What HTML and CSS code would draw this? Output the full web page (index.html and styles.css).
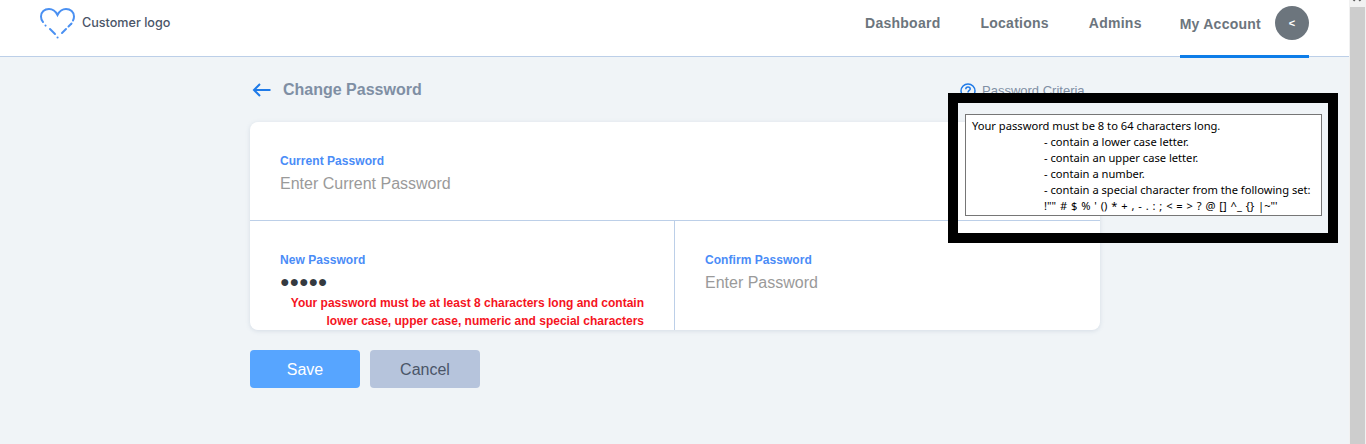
FILE: index.html
```html
<!DOCTYPE html>
<html lang="en">
<head>
<meta charset="utf-8">
<title>Change Password</title>
<link rel="stylesheet" href="styles.css">
</head>
<body>
<div class="page">
  <header class="topbar">
    <div class="brand">
      <svg class="brand-icon" width="36" height="32" viewBox="0 0 36 32" fill="none" stroke="#4a90f2" stroke-width="2" stroke-linecap="round">
        <path d="M3 15 C1.500 13.500 1 11.500 1 9.500 C1 5 4.500 2 9 2 C12.500 2 15.500 4 17.500 8 C19.500 4 22.500 2 26 2 C30.500 2 34 5 34 9.500 C34 11 33.800 12 33 13.500"/>
        <path d="M5.500 18.500 L5.600 18.600"/>
        <path d="M10 22 L15 27"/>
        <path d="M17.500 30.500 L17.600 30.500"/>
        <path d="M22 26 L26 22"/>
        <path d="M28.500 19.500 L31.500 16.500"/>
      </svg>
      <span class="brand-name">Customer logo</span>
    </div>
    <nav class="nav">
      <a class="nav-link">Dashboard</a>
      <a class="nav-link">Locations</a>
      <a class="nav-link">Admins</a>
      <div class="nav-account">
        <a class="nav-link nav-link-active">My Account</a>
        <span class="avatar">&lt;</span>
      </div>
    </nav>
  </header>

  <main class="content">
    <div class="title-row">
      <div class="title-left">
        <svg class="back-icon" width="19" height="14" viewBox="0 0 19 14" fill="none" stroke="#1f7ae8" stroke-width="2">
          <path d="M18.500 7 H2"/>
          <path d="M8 1 L2 7 L8 13"/>
        </svg>
        <h1 class="title">Change Password</h1>
      </div>
      <div class="criteria">
        <svg width="16" height="16" viewBox="0 0 16 16" fill="none" stroke="#1f7ae8" stroke-width="1.500">
          <circle cx="8" cy="8" r="7"/>
          <path d="M5.800 6.200 C5.800 4.800 6.800 4 8 4 C9.300 4 10.200 4.800 10.200 5.900 C10.200 7.400 8 7.500 8 9.400"/>
          <path d="M8 10.800 V12.200"/>
        </svg>
        <span class="criteria-text">Password Criteria</span>
      </div>
    </div>

    <section class="card">
      <div class="field field-current">
        <label class="label">Current Password</label>
        <div class="placeholder">Enter Current Password</div>
      </div>
      <div class="card-row">
        <div class="field field-new">
          <label class="label">New Password</label>
          <div class="dots">●●●●●</div>
          <div class="error">Your password must be at least 8 characters long and contain<br>lower case, upper case, numeric and special characters</div>
        </div>
        <div class="field field-confirm">
          <label class="label">Confirm Password</label>
          <div class="placeholder">Enter Password</div>
        </div>
      </div>
    </section>

    <div class="actions">
      <button class="btn btn-save">Save</button>
      <button class="btn btn-cancel">Cancel</button>
    </div>
  </main>

  <div class="tooltip-frame">
    <div class="tooltip">
      <div>Your password must be 8 to 64 characters long.</div>
      <div class="indent">- contain a lower case letter.</div>
      <div class="indent">- contain an upper case letter.</div>
      <div class="indent">- contain a number.</div>
      <div class="indent">- contain a special character from the following set:</div>
      <div class="indent symbols">!"" # $ % ' () * + , - . : ; &lt; = &gt; ? @ [] ^_ {} |~"'</div>
    </div>
  </div>
</div>
<div class="scrollbar"><span class="scroll-arrow"></span><div class="scroll-thumb"></div></div>
</body>
</html>
```
FILE: styles.css
```css
* { box-sizing: border-box; }
html, body { margin: 0; height: 100%; overflow: hidden; }
body { display: flex; background: #fff; font-family: "Liberation Sans", Arial, sans-serif; }

.page { position: relative; width: 1349px; height: 444px; background: #f0f4f7; flex: none; }
.scrollbar { position: relative; width: 17px; height: 444px; background: #f1f1f1; flex: none; padding: 7px 1px 0; }
.scroll-thumb { height: 437px; background: #cdcdcd; }
.scroll-arrow { position: absolute; top: -3px; left: 5px; width: 6px; height: 6px; border-left: 2px solid #555; border-top: 2px solid #555; transform: rotate(45deg); }

.topbar { height: 57px; background: #fff; border-bottom: 1px solid #bccfe8; display: flex; justify-content: space-between; padding: 0 40px; }
.brand { display: flex; align-items: center; gap: 6px; height: 45px; }
.brand-name { font-family: "Inter", "Noto Sans", sans-serif; font-size: 12.6px; font-weight: 500; color: #4a5568; }
.nav { display: flex; gap: 40px; }
.nav-link { font-size: 14px; font-weight: 700; color: #6c757d; letter-spacing: 0.25px; line-height: 46px; }
.nav-account { display: flex; gap: 14px; height: 58px; margin-left: -2px; border-bottom: 3px solid #0d7de8; }
.nav-link-active { line-height: 48px; }
.avatar { width: 34px; height: 34px; margin-top: 6px; border-radius: 50%; background: #6c757d; color: #fff; font-size: 11px; font-weight: 700; display: flex; align-items: center; justify-content: center; }

.content { width: 850px; margin-left: 250px; }
.title-row { display: flex; justify-content: space-between; height: 65px; padding-top: 23px; }
.title-left { display: flex; align-items: flex-start; gap: 12px; padding-left: 2px; }
.back-icon { margin-top: 3px; }
.title { margin: 0; font-size: 16px; line-height: 19px; font-weight: 700; color: #7f8fa4; }
.criteria { display: flex; gap: 6px; width: 140px; padding-top: 3px; }
.criteria-text { font-size: 13px; line-height: 16px; color: #7f8fa4; white-space: nowrap; }

.card { background: #fff; border-radius: 8px; box-shadow: 0 1px 4px rgba(130, 150, 180, 0.25); height: 208px; }
.field-current { height: 99px; padding: 32px 30px 0; border-bottom: 1px solid #bccfe8; }
.card-row { display: flex; height: 109px; }
.field-new { width: 425px; padding: 32px 30px 0; border-right: 1px solid #bccfe8; }
.field-confirm { flex: 1; padding: 32px 30px 0; }
.label { display: block; font-size: 12px; line-height: 15px; font-weight: 700; color: #4a8cf7; letter-spacing: 0.05px; }
.placeholder { margin-top: 5px; font-size: 16px; line-height: 20px; color: #9a9a9a; }
.dots { margin-top: 6px; font-size: 16px; line-height: 16px; letter-spacing: -0.2px; color: #343a40; }
.error { margin-top: 4px; font-size: 12px; line-height: 18px; font-weight: 700; color: #f5141e; text-align: right; }

.actions { display: flex; gap: 10px; margin-top: 20px; }
.btn { width: 110px; height: 38px; border: 0; border-radius: 4px; padding: 2px 0 0; font-family: inherit; font-size: 16px; }
.btn-save { background: #57a5ff; color: #fff; }
.btn-cancel { background: #b6c4dc; color: #4a5568; }

.tooltip-frame { position: absolute; left: 948px; top: 93px; width: 390px; height: 150px; border: 10px solid #000; padding: 11px 7px 0; }
.tooltip { width: 357px; height: 102px; background: #fff; border: 1px solid #767676; padding: 3px 6px 0; font-family: "Noto Sans", sans-serif; font-size: 11.15px; line-height: 16px; color: #000; white-space: nowrap; }
.indent { padding-left: 72px; }
.symbols { word-spacing: 0.95px; line-height: 15px; }
```
